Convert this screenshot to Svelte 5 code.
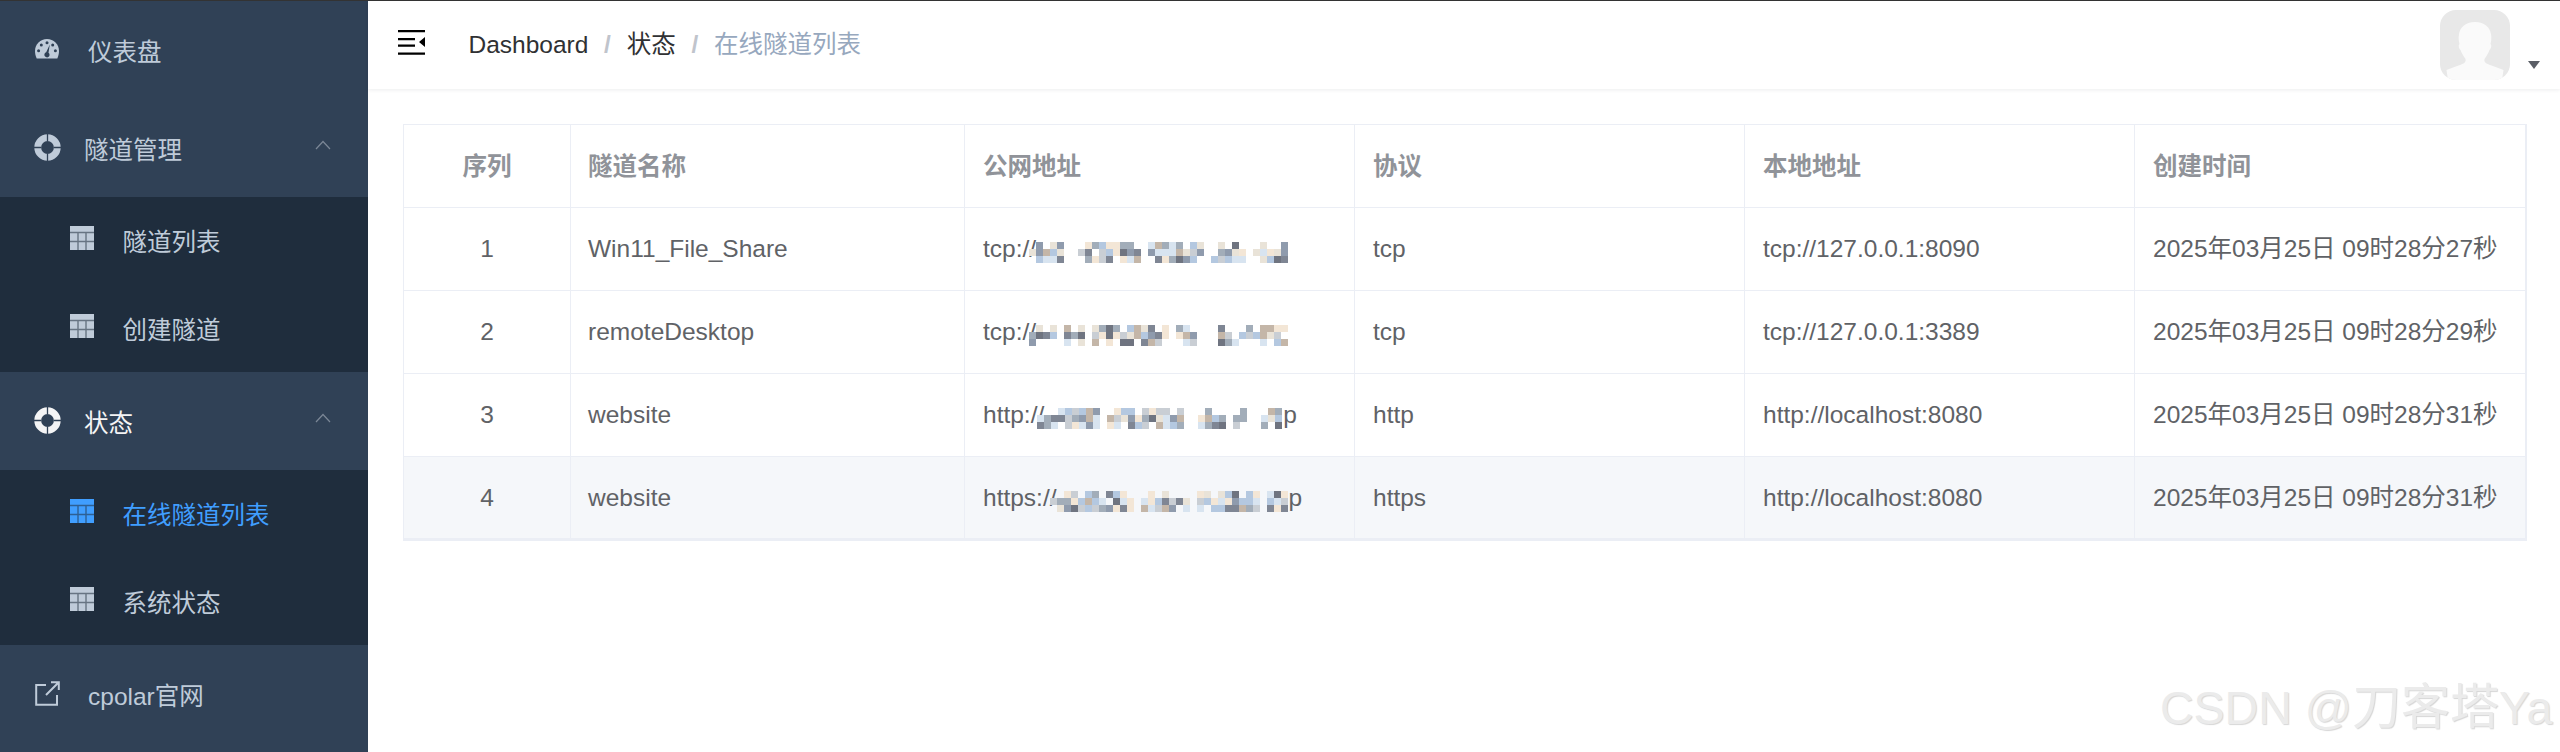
<script>
  const rows = [
    { id: 1, name: 'Win11_File_Share', pre: 'tcp://', post: '', seed: 11, w: 259, gaps: [[35, 45], [110, 118], [172, 180], [215, 225]], proto: 'tcp', local: 'tcp://127.0.0.1:8090', time: '2025年03月25日 09时28分27秒' },
    { id: 2, name: 'remoteDesktop', pre: 'tcp://', post: '', seed: 29, w: 259, gaps: [[25, 33], [55, 62], [140, 147], [168, 188]], proto: 'tcp', local: 'tcp://127.0.0.1:3389', time: '2025年03月25日 09时28分29秒' },
    { id: 3, name: 'website', pre: 'http://', post: 'p', seed: 47, w: 245, gaps: [[62, 68], [145, 158], [212, 222]], proto: 'http', local: 'http://localhost:8080', time: '2025年03月25日 09时28分31秒' },
    { id: 4, name: 'website', pre: 'https://', post: 'p', seed: 83, w: 238, gaps: [[85, 92], [138, 145], [210, 217]], proto: 'https', local: 'http://localhost:8080', time: '2025年03月25日 09时28分31秒' }
  ];

  const columns = ['序列', '隧道名称', '公网地址', '协议', '本地地址', '创建时间'];
  const palette = ['#7f8694', '#c4b6a8', '#b4c8e0', '#e9e3d8', '#8f9bad', '#d8e4f0', '#6f7480', '#c9ced4', '#f3e6d6', '#a2adb9'];
  const skip = [0.3, 0.04, 0.22];

  // blurred-out host names are drawn as a small mosaic
  function mosaic(row) {
    let s = row.seed;
    const next = () => {
      s = (s * 16807) % 2147483647;
      return s / 2147483647;
    };
    const cells = [];
    for (let x = 0; x < row.w; x += 7) {
      if (row.gaps.some(([a, b]) => x + 3 >= a && x + 3 <= b)) continue;
      for (let r = 0; r < 3; r++) {
        if (next() < skip[r]) continue;
        cells.push({ x, y: r * 7, color: palette[Math.floor(next() * palette.length)] });
      }
    }
    return cells;
  }
</script>

{#snippet lifering()}
  <svg class="ring" viewBox="0 0 27 27" width="27" height="27">
    <circle cx="13.5" cy="13.5" r="9.8" fill="none" stroke="currentColor" stroke-width="6.8" />
    <path d="M13.5 0v7M13.5 20v7M0 13.5h7M20 13.5h7" stroke="#304156" stroke-width="1.3" />
  </svg>
{/snippet}

{#snippet grid()}
  <svg class="grid" viewBox="0 0 24 24" width="24" height="24">
    <rect width="24" height="24" fill="currentColor" />
    <path d="M0 6.5h24M0 15.5h24M8 7v17M16 7v17" stroke="#1f2d3d" stroke-opacity="0.55" stroke-width="1.4" />
  </svg>
{/snippet}

<div class="page">
  <aside class="sidebar">
    <a class="item top">
      <svg class="lead" viewBox="0 0 24 20" width="24" height="20">
        <path d="M12 0C5.400 0 0 5.300 0 12c0 2.700.7 5.300 1.700 7.500h20.600c1-2.200 1.700-4.800 1.700-7.500C24 5.300 18.600 0 12 0z" fill="currentColor" />
        <g fill="#304156">
          <circle cx="12" cy="3.800" r="1.500" />
          <circle cx="6.300" cy="6" r="1.500" />
          <circle cx="3.600" cy="11.800" r="1.500" />
          <circle cx="17.700" cy="6" r="1.500" />
          <circle cx="20.400" cy="11.800" r="1.500" />
          <path d="M14.800 5.500l-1.300 8.200a2.600 2.600 0 1 1-2.300-.4z" />
        </g>
      </svg>
      <span class="label">仪表盘</span>
    </a>

    <div class="item group">
      {@render lifering()}
      <span>隧道管理</span>
      <svg class="chevron" viewBox="0 0 16 10" width="16" height="10"><path d="M1 9l7-7.500L15 9" fill="none" stroke="currentColor" stroke-width="1.200" /></svg>
    </div>
    <div class="sub">
      <a class="subitem">{@render grid()}<span>隧道列表</span></a>
      <a class="subitem">{@render grid()}<span>创建隧道</span></a>
    </div>

    <div class="item group open">
      {@render lifering()}
      <span>状态</span>
      <svg class="chevron" viewBox="0 0 16 10" width="16" height="10"><path d="M1 9l7-7.500L15 9" fill="none" stroke="currentColor" stroke-width="1.200" /></svg>
    </div>
    <div class="sub">
      <a class="subitem active">{@render grid()}<span>在线隧道列表</span></a>
      <a class="subitem">{@render grid()}<span>系统状态</span></a>
    </div>

    <a class="item top">
      <svg class="lead" viewBox="0 0 25 25" width="25" height="25">
        <path d="M11 4H1.200v19.800H22V14M11 14L23 2M16 1.200h7.800V9" fill="none" stroke="currentColor" stroke-width="2" />
      </svg>
      <span class="label">cpolar官网</span>
    </a>
  </aside>

  <main class="main">
    <header class="navbar">
      <svg class="hamburger" viewBox="0 0 27 25" width="27" height="25">
        <path d="M0 0h27v2.200H0zM0 8h17v2.200H0zM0 14.500h17v2.200H0zM0 22.500h27v2.200H0zM27 7v10l-6-5z" fill="#000" />
      </svg>
      <nav class="crumbs">
        <span>Dashboard</span><i>/</i><span>状态</span><i>/</i><span class="last">在线隧道列表</span>
      </nav>
      <div class="user">
        <div class="avatar">
          <svg viewBox="0 0 70 70" width="70" height="70">
            <path d="M35 12c10 0 15 6 16 12 .5 3 .500 7-.5 10 1.500 1 .5 5-1 6-1 3-3 6-5 9-.5 1.500 0 3 2 4.500 4 2 11 4 17 6.500L62 70H8l-1.500-10c6-2.500 13-4.500 17-6.500 2-1.500 2.500-3 2-4.500-2-3-4-6-5-9-1.500-1-2.500-5-1-6-1-3-1-7-.5-10C20 18 25 12 35 12z" fill="#fafafa" />
          </svg>
        </div>
        <span class="caret"></span>
      </div>
    </header>

    <section class="content">
      <table>
        <colgroup>
          <col style="width:167px" /><col style="width:394px" /><col style="width:390px" />
          <col style="width:390px" /><col style="width:390px" /><col style="width:391px" />
        </colgroup>
        <thead>
          <tr>
            {#each columns as col, i}
              <th class:center={i === 0}>{col}</th>
            {/each}
          </tr>
        </thead>
        <tbody>
          {#each rows as row, i}
            <tr class:hover={i === 3}>
              <td class="center">{row.id}</td>
              <td class="name">{row.name}</td>
              <td class="addr">
                {row.pre}<svg class="blur" width={row.w} height="21" viewBox="0 0 {row.w} 21">
                  {#each mosaic(row) as c}
                    <rect x={c.x} y={c.y} width="7" height="7" fill={c.color} />
                  {/each}
                </svg><span class="tail">{row.post}</span>
              </td>
              <td>{row.proto}</td>
              <td>{row.local}</td>
              <td>{row.time}</td>
            </tr>
          {/each}
        </tbody>
      </table>
    </section>
  </main>

  <div class="watermark">CSDN @<span>刀客塔</span>Ya</div>
</div>

<style>
  :global(body) {
    margin: 0;
    background: #fff;
  }
  .page {
    display: flex;
    height: 751px;
    border-top: 1px solid #333;
    overflow: hidden;
    font-family: "Liberation Sans", "Noto Sans CJK SC", sans-serif;
    font-size: 24.5px;
    line-height: 28px;
    position: relative;
  }
  .sidebar {
    width: 368px;
    flex: none;
    background: #304156;
    color: #bfcbd9;
  }
  .sidebar span {
    padding-top: 5px;
  }
  .item {
    display: flex;
    align-items: center;
    height: 98px;
    padding-left: 34px;
    box-sizing: border-box;
  }
  .item.top {
    padding-left: 35px;
  }
  .lead {
    flex: none;
    margin-top: -2px;
  }
  .label {
    margin-left: 29px;
  }
  .item.top .lead[viewBox="0 0 25 25"] + .label {
    margin-left: 28px;
  }
  .group {
    position: relative;
  }
  .group .ring {
    margin-right: 23px;
    margin-top: -2px;
    flex: none;
  }
  .group.open {
    color: #f4f4f5;
  }
  .chevron {
    position: absolute;
    left: 315px;
    top: 41px;
    color: #7b8796;
  }
  .sub {
    background: #1f2d3d;
  }
  .subitem {
    display: flex;
    align-items: center;
    height: 87.5px;
    padding-left: 70px;
    box-sizing: border-box;
  }
  .subitem span {
    margin-left: 28.5px;
  }
  .subitem .grid {
    margin-top: -5px;
    flex: none;
  }
  .subitem.active {
    color: #409eff;
  }
  .main {
    flex: 1;
    min-width: 0;
  }
  .navbar {
    display: flex;
    align-items: center;
    height: 88px;
    padding-left: 29.5px;
    padding-right: 20px;
    box-shadow: 0 1px 4px rgba(0, 21, 41, 0.08);
    position: relative;
  }
  .hamburger {
    flex: none;
    margin-top: -6px;
  }
  .crumbs {
    margin-left: 44px;
    color: #303133;
  }
  .crumbs i {
    font-style: normal;
    font-weight: 700;
    color: #c0c4cc;
    margin: 0 15.75px;
  }
  .crumbs .last {
    color: #97a8be;
  }
  .user {
    margin-left: auto;
    display: flex;
    gap: 18px;
    align-self: flex-start;
    padding-top: 9px;
  }
  .avatar {
    width: 70px;
    height: 70px;
    border-radius: 16px;
    background: #e8e8e8;
    overflow: hidden;
  }
  .avatar svg {
    display: block;
  }
  .caret {
    width: 0;
    height: 0;
    margin-top: 51px;
    border-left: 6.5px solid transparent;
    border-right: 6.5px solid transparent;
    border-top: 8px solid #5a5e66;
  }
  .content {
    padding: 35px 35px 0;
  }
  table {
    table-layout: fixed;
    width: 2122px;
    border-collapse: collapse;
    color: #606266;
    border-right: 2px solid #ebeef5;
    border-bottom: 3px solid #ebeef5;
  }
  th,
  td {
    height: 83px;
    padding: 0 0 0 18px;
    box-sizing: border-box;
    border: 1px solid #ebeef5;
    text-align: left;
    white-space: nowrap;
    overflow: hidden;
  }
  th {
    color: #909399;
    font-weight: 700;
    padding-top: 2px;
  }
  th.center,
  td.center {
    text-align: center;
    padding-left: 0;
  }
  td.name,
  th:nth-child(2) {
    padding-left: 17px;
  }
  tr.hover td {
    background: #f5f7fa;
  }
  .blur {
    vertical-align: -6px;
    margin-left: -7px;
  }
  .tail {
    margin-left: 1px;
  }
  .watermark {
    position: absolute;
    left: 2160px;
    top: 676px;
    font-size: 46.5px;
    line-height: 60px;
    white-space: nowrap;
    color: #ebebeb;
    text-shadow: 1px 1px 1px #d6d6d6;
  }
  .watermark span {
    font-size: 49px;
  }
</style>
